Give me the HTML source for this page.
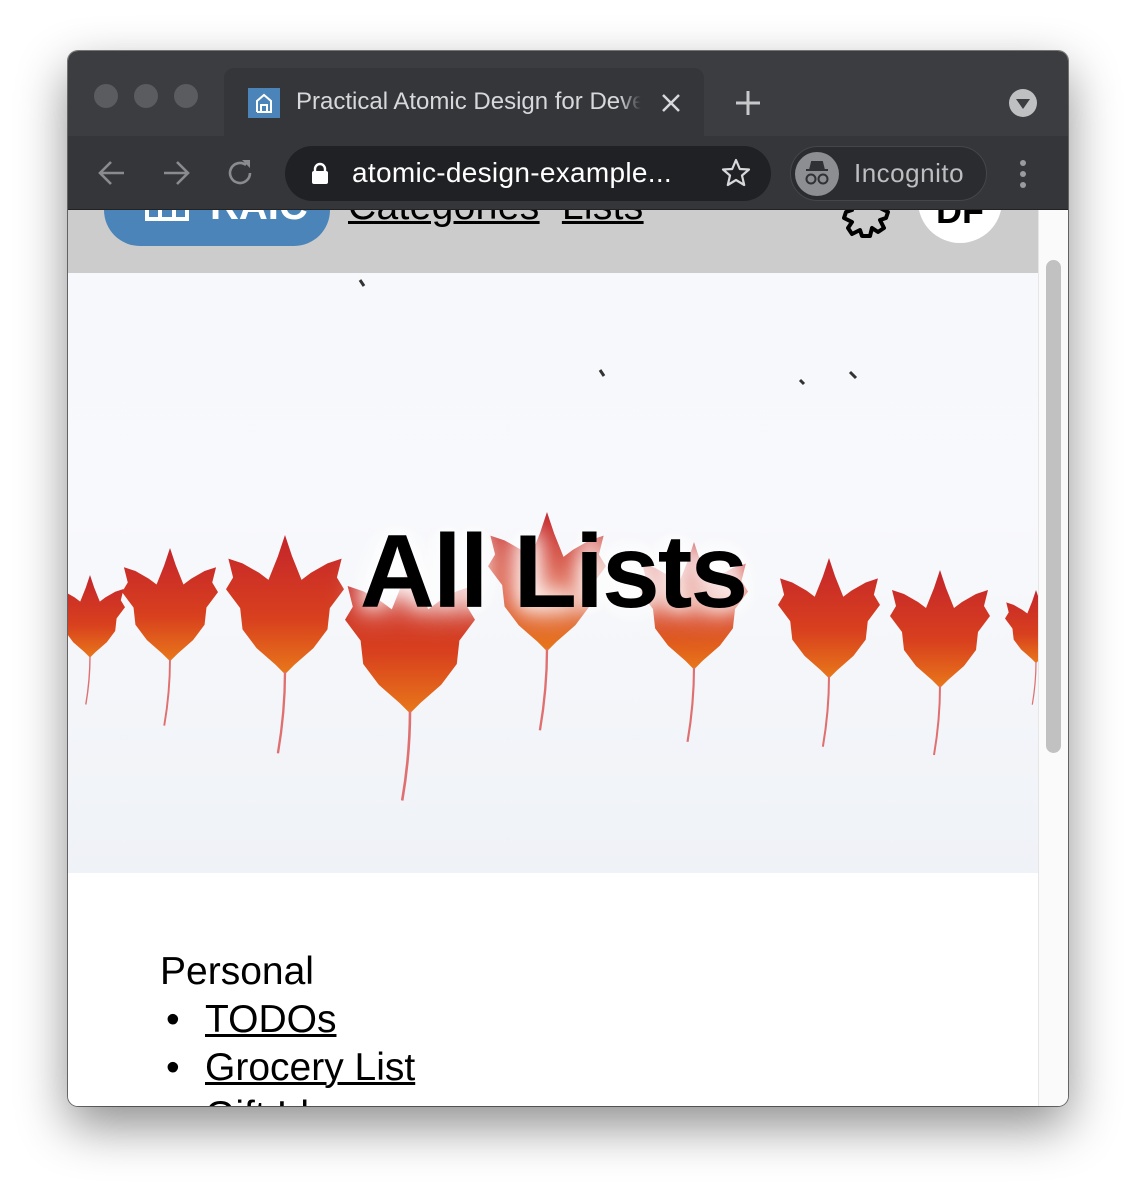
<!DOCTYPE html>
<html><head><style>
*{margin:0;padding:0;box-sizing:border-box}
body{width:1136px;height:1190px;background:#fff;font-family:"Liberation Sans",sans-serif;position:relative;overflow:hidden}
.win{position:absolute;left:68px;top:51px;width:1000px;height:1055px;border-radius:10px;overflow:hidden;box-shadow:0 20px 50px rgba(0,0,0,.45),0 0 0 1px rgba(0,0,0,.5);background:#fff}
.title{position:absolute;left:0;top:0;width:1000px;height:85px;background:#3c3d40}
.tab{position:absolute;left:156px;top:17px;width:480px;height:70px;background:#35363a;border-radius:10px 10px 0 0}
.tb{position:absolute;left:0;top:85px;width:1000px;height:74px;background:#35363a;border-bottom:1px solid #222}
.dot{position:absolute;top:33px;width:24px;height:24px;border-radius:50%;background:#5b5c5f}
.page{position:absolute;left:0;top:159px;width:970px;height:896px;overflow:hidden;background:#fff}
.hdr{position:absolute;left:0;top:0;width:970px;height:63px;background:#cccccc;overflow:hidden}
.scroll{position:absolute;left:970px;top:159px;width:30px;height:896px;background:#fafafa;border-left:1px solid #e6e6e6}
</style></head><body>
<div class="win">
 <div class="title">
  <div class="dot" style="left:26px"></div><div class="dot" style="left:66px"></div><div class="dot" style="left:106px"></div>
  <div class="tab">
   <div style="position:absolute;left:24px;top:20px;width:32px;height:30px;background:#4a84b8"></div>
   <svg style="position:absolute;left:24px;top:20px" width="32" height="30"><path d="M9 24V13L16 7L23 13V24H9M13 24V17H19V24" fill="none" stroke="#fff" stroke-width="2"/></svg>
   <div style="position:absolute;left:72px;top:20px;width:346px;overflow:hidden;white-space:nowrap;color:#d7d8da;font-size:24px">Practical Atomic Design for Developers</div>
   <div style="position:absolute;left:396px;top:15px;width:26px;height:40px;background:linear-gradient(90deg,rgba(53,54,58,0),#35363a 80%)"></div>
   <svg style="position:absolute;left:436px;top:24px" width="22" height="22"><path d="M3 3L19 19M19 3L3 19" stroke="#d7d8da" stroke-width="2.5"/></svg>
  </div>
  <svg style="position:absolute;left:666px;top:38px" width="28" height="28"><path d="M14 2V26M2 14H26" stroke="#c8c9cb" stroke-width="3"/></svg>
  <svg style="position:absolute;left:940px;top:37px" width="30" height="30"><circle cx="15" cy="15" r="14" fill="#bfc0c2"/><path d="M8 11H22L15 21Z" fill="#3c3d40"/></svg>
 </div>
 <div class="tb">
  <svg style="position:absolute;left:28px;top:22px" width="32" height="30"><path d="M28 15H4M15 4L4 15L15 26" fill="none" stroke="#8a8b8e" stroke-width="2.6"/></svg>
  <svg style="position:absolute;left:92px;top:22px" width="32" height="30"><path d="M4 15H28M17 4L28 15L17 26" fill="none" stroke="#8a8b8e" stroke-width="2.6"/></svg>
  <svg style="position:absolute;left:156px;top:21px" width="32" height="32"><path d="M26 16A10 10 0 1 1 22 8" fill="none" stroke="#8a8b8e" stroke-width="2.6"/><path d="M18 3H26V11Z" fill="#8a8b8e"/></svg>
  <div style="position:absolute;left:217px;top:10px;width:486px;height:55px;border-radius:28px;background:#202124"></div>
  <svg style="position:absolute;left:242px;top:26px" width="20" height="24"><rect x="2" y="9" width="16" height="13" rx="2" fill="#fff"/><path d="M5 10V7A5 5 0 0 1 15 7V10" fill="none" stroke="#fff" stroke-width="2.4"/></svg>
  <div style="position:absolute;left:284px;top:21px;color:#fff;font-size:28px;letter-spacing:0.3px">atomic-design-example...</div>
  <svg style="position:absolute;left:653px;top:22px" width="30" height="30"><path d="M15 2L18.8 11 28 11.5 21 17.5 23.2 27 15 22 6.8 27 9 17.5 2 11.5 11.2 11Z" fill="none" stroke="#d7d8da" stroke-width="2.2" stroke-linejoin="round"/></svg>
  <div style="position:absolute;left:722px;top:10px;width:197px;height:55px;border-radius:28px;background:#2b2c2f;border:1px solid #45464a"></div>
  <svg style="position:absolute;left:726px;top:15px" width="46" height="46"><circle cx="23" cy="23" r="22" fill="#8d8e91"/><path d="M12 19H34M16 19L18 11H28L30 19" fill="#303134" stroke="#303134" stroke-width="2"/><circle cx="17" cy="28" r="4.5" fill="none" stroke="#303134" stroke-width="2"/><circle cx="29" cy="28" r="4.5" fill="none" stroke="#303134" stroke-width="2"/></svg>
  <div style="position:absolute;left:786px;top:22px;color:#bdbec0;font-size:26px;letter-spacing:0.5px">Incognito</div>
  <svg style="position:absolute;left:950px;top:22px" width="10" height="32"><circle cx="5" cy="5" r="3" fill="#9a9b9e"/><circle cx="5" cy="16" r="3" fill="#9a9b9e"/><circle cx="5" cy="27" r="3" fill="#9a9b9e"/></svg>
 </div>
 <div class="page">
  <div class="hdr">
   <div style="position:absolute;left:36px;top:-40px;width:226px;height:76px;background:#4a84b8;border-radius:36px"></div>
   <svg style="position:absolute;left:76px;top:-6px" width="46" height="24"><path d="M3 0V15H43V0M16 0V15M30 0V15" fill="none" stroke="#fff" stroke-width="4"/></svg>
   <div style="position:absolute;left:142px;top:-26px;color:#fff;font-size:40px;font-weight:bold">RAIC</div>
   <div style="position:absolute;left:280px;top:-25px;font-size:39px;color:#000;letter-spacing:0.3px"><u style="text-decoration-thickness:3px">Categories</u>&nbsp;&nbsp;<u style="text-decoration-thickness:3px">Lists</u></div>
   <svg style="position:absolute;left:766px;top:-20px" width="60" height="54"><path d="M30 6L34 0H40L40 8L48 6L50 12L46 18L54 22L52 28L46 30L50 38L44 42L38 38L36 46L28 46L26 40L18 44L14 38L18 32L10 28L12 22L18 20L14 12L20 8L26 10Z" fill="none" stroke="#000" stroke-width="4" stroke-linejoin="round"/></svg>
   <div style="position:absolute;left:850px;top:-51px;width:84px;height:84px;border-radius:50%;background:#fff"></div>
   <div style="position:absolute;left:868px;top:-20px;font-size:36px;font-weight:bold">DF</div>
  </div>
  <div style="position:absolute;left:0;top:63px;width:970px;height:600px;background:linear-gradient(180deg,#f6f8fb,#f8f9fc 40%,#eff2f7);overflow:hidden">
   <svg width="970" height="600" viewBox="68 273 970 600" style="position:absolute;left:0;top:0">
    <defs>
     <linearGradient id="lg" x1="0" y1="0" x2="0" y2="1"><stop offset="0" stop-color="#c4252b"/><stop offset=".6" stop-color="#d8401e"/><stop offset="1" stop-color="#e8781a"/></linearGradient>
     <symbol id="leaf" viewBox="0 0 100 200" overflow="visible"><path d="M50 0L56 18L64 38L72 32L86 24L98 20L94 36L100 46L88 62L86 80L74 96L58 110L50 118L42 110L26 96L14 80L12 62L0 46L6 36L2 20L14 24L28 32L36 38L44 18Z" fill="url(#lg)"/><path d="M50 116Q50 150 44 185" fill="none" stroke="#e07070" stroke-width="2"/></symbol>
    </defs>
    <path d="M360 280l4 6M850 372l6 6M800 380l4 4M600 370l4 6" stroke="#333" stroke-width="3"/>
    <use href="#leaf" x="55" y="575" width="70" height="140"/>
    <use href="#leaf" x="122" y="548" width="96" height="192"/>
    <use href="#leaf" x="226" y="535" width="118" height="236"/>
    <use href="#leaf" x="345" y="560" width="130" height="260"/>
    <use href="#leaf" x="488" y="490" width="118" height="280"/>
    <use href="#leaf" x="640" y="525" width="108" height="250"/>
    <use href="#leaf" x="778" y="545" width="102" height="230"/>
    <use href="#leaf" x="890" y="565" width="100" height="210"/>
    <use href="#leaf" x="1005" y="590" width="62" height="124"/>
   </svg>
   <div style="position:absolute;left:0;top:240px;width:970px;text-align:center;font-size:104px;font-weight:bold;color:#000;letter-spacing:-2px;text-shadow:0 0 18px #fff,0 0 30px #fff,0 0 40px #fff">All Lists</div>
  </div>
  <div style="position:absolute;left:92px;top:738px;font-size:39px;line-height:48px">
   Personal<br>
   <span style="display:inline-block;width:45px;padding-left:6px">•</span><u style="text-decoration-thickness:3px">TODOs</u><br>
   <span style="display:inline-block;width:45px;padding-left:6px">•</span><u style="text-decoration-thickness:3px">Grocery List</u><br>
   <span style="display:inline-block;width:45px;padding-left:6px">•</span><u>Gift Ideas</u>
  </div>
 </div>
 <div class="scroll"><div style="position:absolute;left:7px;top:50px;width:15px;height:493px;border-radius:8px;background:#c1c1c1"></div></div>
</div>
</body></html>
